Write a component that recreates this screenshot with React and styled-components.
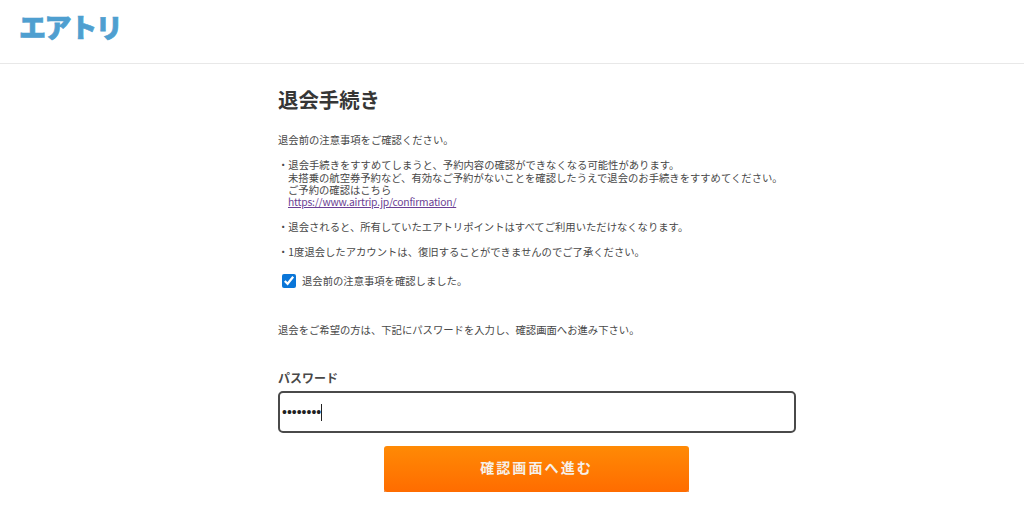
import styled, { createGlobalStyle } from "styled-components";

const GlobalStyle = createGlobalStyle`
  html, body {
    margin: 0;
    padding: 0;
    background: #fff;
    color: #484848;
    font-family: "Noto Sans CJK JP", "Noto Sans", sans-serif;
  }
`;

const Header = styled.header`
  height: 52px;
  padding: 11px 0 0 19px;
  border-bottom: 1px solid #e8e8e8;
`;

const Logo = styled.div`
  width: 101px;
  margin-top: -1px;
  font-size: 27px;
  line-height: 34px;
  font-weight: 900;
  letter-spacing: -1.4px;
  color: #4f9fd0;
  -webkit-text-stroke: 0.7px #4f9fd0;
  white-space: nowrap;
`;

const Main = styled.main`
  width: 518px;
  margin-left: 278px;
  padding-top: 21px;
`;

const Title = styled.h1`
  margin: 0 0 20px;
  font-size: 20.4px;
  line-height: 29px;
  font-weight: 700;
  color: #363636;
`;

const Para = styled.p`
  margin: 0 0 ${(p) => p.$gap || 12}px;
  font-size: 10.33px;
  line-height: 12.3px;
  color: #484848;
`;

const Indented = styled.span`
  display: block;
  padding-left: 10px;
`;

const TextLink = styled.a`
  color: #6b3f94;
  text-decoration: underline;
  letter-spacing: -0.2px;
`;

const CheckRow = styled.label`
  display: flex;
  align-items: center;
  gap: 6px;
  padding-left: 4px;
  margin-bottom: 36px;
  font-size: 10.33px;
  line-height: 14px;
  color: #484848;
`;

const CheckBox = styled.input`
  width: 14px;
  height: 14px;
  margin: 0;
  accent-color: #0a76d8;
`;

const FieldLabel = styled.div`
  margin-top: 34px;
  font-size: 12px;
  line-height: 16px;
  font-weight: 700;
  color: #484848;
`;

const PasswordInput = styled.div`
  box-sizing: border-box;
  height: 42px;
  margin-top: 5px;
  padding-left: 2px;
  display: flex;
  align-items: center;
  border: 2px solid #4a4a4a;
  border-radius: 5px;
  background: #fff;
`;

const Dots = styled.span`
  font-family: "Liberation Sans", sans-serif;
  font-size: 14px;
  line-height: 16px;
  color: #222;
`;

const Caret = styled.span`
  width: 1px;
  height: 17px;
  background: #222;
`;

const SubmitButton = styled.button`
  display: block;
  width: 305px;
  height: 46px;
  margin: 13px 0 0 106px;
  padding: 0 0 4px;
  border: 0;
  border-radius: 3px;
  background: linear-gradient(#ff8a05, #ff6c00);
  box-shadow: 0 1px 0 #c9661e;
  color: #f6f0ea;
  font-family: inherit;
  font-size: 14px;
  font-weight: 700;
  letter-spacing: 2.1px;
`;

export default function App() {
  return (
    <>
      <GlobalStyle />
      <Header>
        <Logo>エアトリ</Logo>
      </Header>
      <Main>
        <Title>退会手続き</Title>
        <Para $gap={13}>退会前の注意事項をご確認ください。</Para>
        <Para $gap={13}>
          ・退会手続きをすすめてしまうと、予約内容の確認ができなくなる可能性があります。
          <Indented>未搭乗の航空券予約など、有効なご予約がないことを確認したうえで退会のお手続きをすすめてください。</Indented>
          <Indented>ご予約の確認はこちら</Indented>
          <Indented>
            <TextLink href="#">https://www.airtrip.jp/confirmation/</TextLink>
          </Indented>
        </Para>
        <Para $gap={12}>・退会されると、所有していたエアトリポイントはすべてご利用いただけなくなります。</Para>
        <Para $gap={16}>・1度退会したアカウントは、復旧することができませんのでご了承ください。</Para>
        <CheckRow>
          <CheckBox type="checkbox" defaultChecked />
          退会前の注意事項を確認しました。
        </CheckRow>
        <Para>退会をご希望の方は、下記にパスワードを入力し、確認画面へお進み下さい。</Para>
        <FieldLabel>パスワード</FieldLabel>
        <PasswordInput>
          <Dots>••••••••</Dots>
          <Caret />
        </PasswordInput>
        <SubmitButton type="button">確認画面へ進む</SubmitButton>
      </Main>
    </>
  );
}
